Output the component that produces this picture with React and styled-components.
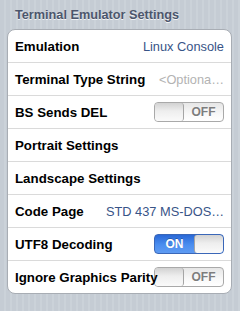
import React from "react";
import styled, { createGlobalStyle } from "styled-components";

const Global = createGlobalStyle`
  html, body { margin: 0; padding: 0; }
  body {
    width: 240px;
    height: 311px;
    overflow: hidden;
    font-family: "Liberation Sans", Arial, Helvetica, sans-serif;
    background: repeating-linear-gradient(90deg, #c5ccd4 0px, #c5ccd4 4px, #cbd2d9 4px, #cbd2d9 6px);
  }
`;

const Page = styled.div`
  width: 240px;
  height: 311px;
  box-sizing: border-box;
  padding: 0 8px 0 7px;
  display: flex;
  flex-direction: column;
`;

const Header = styled.div`
  height: 29px;
  box-sizing: border-box;
  padding: 8px 0 0 8px;
  font-size: 12.7px;
  font-weight: bold;
  color: #4c566c;
  text-shadow: 0 1px 0 rgba(255, 255, 255, 0.8);
  line-height: 15px;
  white-space: nowrap;
`;

const Group = styled.div`
  background: #fff;
  border: 1px solid #a8adb4;
  border-radius: 8px;
  overflow: hidden;
`;

const Row = styled.div`
  height: 32px;
  display: flex;
  align-items: center;
  padding: 0 7px 0 7px;
  & + & {
    border-top: 1px solid #dadada;
  }
`;

const Label = styled.span`
  flex: 0 1 auto;
  min-width: 0;
  position: relative;
  z-index: 1;
  font-size: 13.3px;
  font-weight: bold;
  color: #000;
  white-space: nowrap;
`;

const Value = styled.span`
  margin-left: auto;
  padding-left: 8px;
  font-size: 12.8px;
  color: ${(p) => (p.$placeholder ? "#b3b3b3" : "#385487")};
  white-space: nowrap;
`;

const Switch = styled.div`
  margin-left: auto;
  flex: 0 0 70px;
  height: 20px;
  box-sizing: border-box;
  border: 1px solid ${(p) => (p.$on ? "#3a67b8" : "#a9a9a9")};
  border-radius: 4px;
  display: flex;
  overflow: hidden;
  flex-direction: ${(p) => (p.$on ? "row" : "row-reverse")};
  background: ${(p) =>
    p.$on
      ? "linear-gradient(#2a68d6, #4a8ef0 55%, #5f9bf2)"
      : "linear-gradient(#e6e6e6, #f8f8f8 60%, #ffffff)"};
`;

const SwitchText = styled.span`
  flex: 1;
  display: flex;
  align-items: center;
  justify-content: center;
  font-size: 12px;
  font-weight: bold;
  color: ${(p) => (p.$on ? "#fff" : "#7d7d7d")};
  text-shadow: ${(p) => (p.$on ? "0 -1px 0 rgba(0,0,0,0.25)" : "0 1px 0 #fff")};
`;

const Knob = styled.span`
  flex: 0 0 29px;
  box-sizing: border-box;
  border-${(p) => (p.$on ? "left" : "right")}: 1px solid #a5a5a5;
  border-radius: 3px;
  background: linear-gradient(#d2d2d2, #eeeeee 45%, #fafafa);
`;

function Toggle({ on }) {
  return (
    <Switch $on={on}>
      <SwitchText $on={on}>{on ? "ON" : "OFF"}</SwitchText>
      <Knob $on={on} />
    </Switch>
  );
}

export default function App() {
  return (
    <>
      <Global />
      <Page>
        <Header>Terminal Emulator Settings</Header>
        <Group>
          <Row>
            <Label>Emulation</Label>
            <Value>Linux Console</Value>
          </Row>
          <Row>
            <Label>Terminal Type String</Label>
            <Value $placeholder>&lt;Optiona…</Value>
          </Row>
          <Row>
            <Label>BS Sends DEL</Label>
            <Toggle on={false} />
          </Row>
          <Row>
            <Label>Portrait Settings</Label>
          </Row>
          <Row>
            <Label>Landscape Settings</Label>
          </Row>
          <Row>
            <Label>Code Page</Label>
            <Value>STD 437 MS-DOS…</Value>
          </Row>
          <Row>
            <Label>UTF8 Decoding</Label>
            <Toggle on={true} />
          </Row>
          <Row>
            <Label>Ignore Graphics Parity</Label>
            <Toggle on={false} />
          </Row>
        </Group>
      </Page>
    </>
  );
}
